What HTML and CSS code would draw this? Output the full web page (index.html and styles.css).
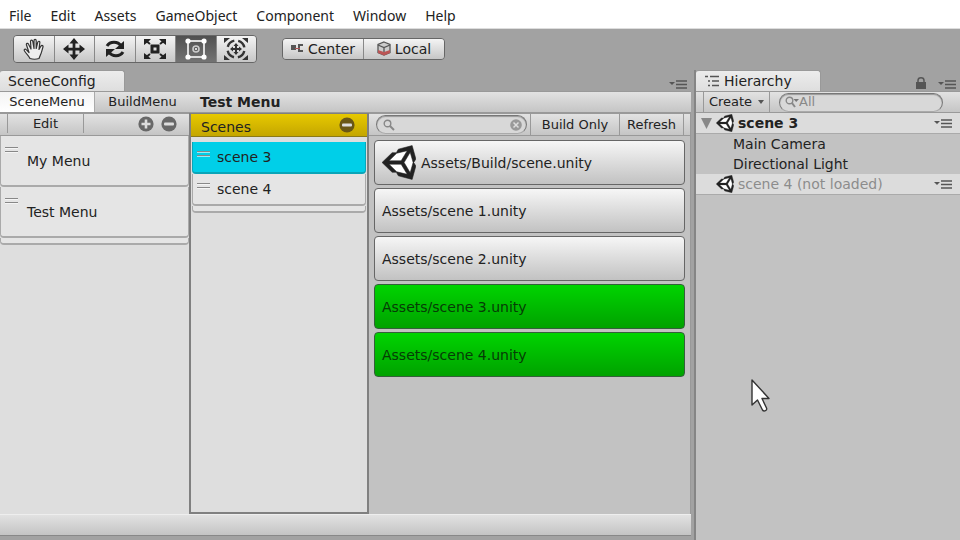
FILE: index.html
```html
<!DOCTYPE html>
<html lang="en">
<head>
<meta charset="utf-8">
<title>Unity Editor - SceneConfig</title>
<link rel="stylesheet" href="styles.css">
</head>
<body>
<svg class="sprite" aria-hidden="true">
  <symbol id="unity" viewBox="15 10 485 492">
    <path fill="#fff" d="M440 60 250 90 60 256l190 166 190 30 40-196z"/>
    <path fill="#222" stroke="#222" stroke-width="8" d="M498 206 445 15 248 66l-29 51-59-1L16 256l144 140 59-1 29 51 197 51 53-191-30-50zM224 124l151-37-87 145H115zm0 264L115 280h173l87 145zm193 14L330 256l87-146 42 146z"/>
  </symbol>
  <symbol id="menu" viewBox="0 0 18 9">
    <path fill="#555" d="M0 2h6L3 5z"/><path stroke="#555" stroke-width="1.4" d="M7 1h11M7 4.5h11M7 8h11"/>
  </symbol>
  <symbol id="minus" viewBox="0 0 16 16">
    <circle cx="8" cy="8" r="7.6" fill="currentColor"/><rect class="sign" x="3" y="6.6" width="10" height="2.8" rx="1"/>
  </symbol>
  <symbol id="grip" viewBox="0 0 13 6">
    <path stroke="#888" d="M0 .5h13M0 4.5h13"/><path stroke="#fff" stroke-opacity=".6" d="M0 1.5h13M0 5.5h13"/>
  </symbol>
</svg>

<nav class="menubar">
  <a href="#">File</a><a href="#">Edit</a><a href="#">Assets</a><a href="#">GameObject</a><a href="#">Component</a><a href="#">Window</a><a href="#">Help</a>
</nav>

<header class="toolbar">
  <div class="group tools">
    <button aria-label="Hand"><svg viewBox="0 0 22 22" width="22" height="22"><path fill="#eee" stroke="#333" stroke-width="1.200" stroke-linejoin="round" stroke-linecap="round" d="M7 20.500C6 18 3.500 16 1.500 13c-1-1.800.8-2.600 2-1.200L6 14.500 3.500 7c-.5-1.800 1.400-2.300 2-.8L8 11 7.500 3.500c0-1.800 2-1.800 2.300 0L11 10.500V2.800c0-1.800 2.200-1.800 2.200 0v7.700l1.500-6.200c.5-1.700 2.400-1.200 2.100.5L16 11.500l1.800-3.200c1-1.500 2.700-.7 2.100.9-.9 2.800-1.200 5-2.300 7.300L16 20.500c-3 1-6 1-9 0z"/></svg></button>
    <button aria-label="Move"><svg viewBox="0 0 24 24" width="22" height="22"><path fill="#222" d="M12 0l5 6h-3.500v4.500H18V7l6 5-6 5v-3.500h-4.500V18H17l-5 6-5-6h3.500v-4.500H6V17l-6-5 6-5v3.500h4.500V6H7z"/></svg></button>
    <button aria-label="Rotate"><svg viewBox="0 0 20 18" width="20" height="18"><path fill="none" stroke="#222" stroke-width="3" d="M2 6C5 1 13 1 16 6M18 12C15 17 7 17 4 12"/><path fill="#222" d="M19 1v8h-9zM1 17V9h9z"/></svg></button>
    <button aria-label="Scale"><svg viewBox="0 0 24 22" width="24" height="22"><path fill="none" stroke="#222" stroke-width="3" d="M9 8h6v6H9z"/><path stroke="#222" stroke-width="2" d="M2 2l5 4M22 2l-5 4M2 20l5-4M22 20l-5-4"/><path fill="#222" d="M1 7V1h7L5 4zM23 7V1h-7l3 3zM1 15v6h7l-3-3zM23 15v6h-7l3-3z"/></svg></button>
    <button aria-label="Rect" aria-pressed="true"><svg viewBox="0 0 22 22" width="22" height="22"><path fill="none" stroke="#ddd" stroke-width="2" d="M3 3h16v16H3z"/><g fill="#fff"><circle cx="3" cy="3" r="2.600"/><circle cx="19" cy="3" r="2.600"/><circle cx="3" cy="19" r="2.600"/><circle cx="19" cy="19" r="2.600"/></g><circle cx="11" cy="11" r="3" fill="none" stroke="#ccc" stroke-width="1.600"/><circle cx="11" cy="11" r="1" fill="#fff"/></svg></button>
    <button aria-label="Transform"><svg viewBox="0 0 24 24" width="24" height="24"><circle cx="12" cy="12" r="8.500" fill="none" stroke="#333" stroke-width="2.400" stroke-dasharray="9.350 4" stroke-dashoffset="-2"/><path fill="#333" d="M0 6V1h6zM24 6V1h-6zM0 18v5h6zM24 18v5h-6zM12 6l2.500 3H13v2h2V9.500l3 2.500-3 2.500V13h-2v2h1.500L12 18l-2.500-3H11v-2H9v1.500L6 12l3-2.500V11h2V9H9.500z"/></svg></button>
  </div>
  <div class="group pivots">
    <button><svg viewBox="0 0 13 9" width="13" height="9"><path fill="#555" d="M0 1h5v5H0zM7 0h5v2H9v4h3v2H7z"/><path stroke="#a55" d="M4 4.500h5"/></svg>Center</button>
    <button><svg viewBox="0 0 14 15" width="14" height="15"><path fill="#ccc" stroke="#555" stroke-width="1.300" d="M7 1l6 2.500v8L7 14l-6-2.500v-8z"/><path fill="#b55" d="M1 9l6 2 6-2v3l-6 2.500L1 12z"/><path fill="none" stroke="#555" stroke-width="1.300" d="M1 4l6 2.500L13 4M7 6v5"/></svg>Local</button>
  </div>
</header>

<main class="workspace">
  <section class="window config">
    <div class="tabs"><h2 class="tab">SceneConfig</h2><button class="icon options" aria-label="Window options"><svg width="18" height="9"><use href="#menu"/></svg></button></div>
    <div class="bar modes"><button class="mode" aria-pressed="true">SceneMenu</button><button class="mode">BuildMenu</button><strong>Test Menu</strong></div>
    <div class="columns">
      <section class="menus">
        <div class="bar actions">
          <button class="edit">Edit</button>
          <button class="icon" aria-label="Add menu"><svg width="16" height="16" viewBox="0 0 16 16"><circle cx="8" cy="8" r="7.600" fill="#686868"/><path stroke="#ddd" stroke-width="2.600" d="M3.500 8h9M8 3.500v9"/></svg></button>
          <button class="icon" aria-label="Remove menu"><svg width="16" height="16"><use href="#minus"/></svg></button>
        </div>
        <ul class="list tall">
          <li><svg class="grip"><use href="#grip"/></svg>My Menu</li>
          <li><svg class="grip"><use href="#grip"/></svg>Test Menu</li>
        </ul>
      </section>
      <section class="scenes">
        <div class="scenes-head"><h3>Scenes</h3><button class="icon" aria-label="Remove scene group"><svg width="16" height="16"><use href="#minus"/></svg></button></div>
        <ul class="list">
          <li class="selected"><svg class="grip"><use href="#grip"/></svg>scene 3</li>
          <li><svg class="grip"><use href="#grip"/></svg>scene 4</li>
        </ul>
      </section>
      <section class="assets">
        <div class="bar filter">
          <div class="search"><svg width="12" height="12" viewBox="0 0 12 12"><circle cx="4.500" cy="4.500" r="3.300" fill="none" stroke="#888" stroke-width="1.400"/><path stroke="#888" stroke-width="2" d="M7 7l4 4"/></svg><input type="text" aria-label="Search scenes"><button class="icon" aria-label="Clear search"><svg width="12" height="12" viewBox="0 0 12 12"><circle cx="6" cy="6" r="5.800" fill="#999"/><path stroke="#ddd" stroke-width="1.500" d="M3.500 3.500l5 5M8.500 3.500l-5 5"/></svg></button></div>
          <button class="build">Build Only</button><button class="refresh">Refresh</button>
        </div>
        <div class="cards">
          <button class="card"><svg width="34" height="35"><use href="#unity"/></svg>Assets/Build/scene.unity</button>
          <button class="card">Assets/scene 1.unity</button>
          <button class="card">Assets/scene 2.unity</button>
          <button class="card loaded">Assets/scene 3.unity</button>
          <button class="card loaded">Assets/scene 4.unity</button>
        </div>
      </section>
    </div>
    <footer class="status"></footer>
  </section>

  <section class="window hierarchy">
    <div class="tabs">
      <h2 class="tab"><svg width="15" height="12" viewBox="0 0 15 12"><path stroke="#555" stroke-width="1.500" d="M0 1.500h3M5 1.500h9M3 6h2M7 6h7M3 10.500h2M7 10.500h7"/></svg>Hierarchy</h2>
      <button class="icon lock" aria-label="Lock"><svg width="10" height="12" viewBox="0 0 10 12"><path fill="#555" d="M0 5h10v7H0z"/><path fill="none" stroke="#555" stroke-width="1.500" d="M2 6V3.500c0-3.600 6-3.600 6 0V6"/></svg></button>
      <button class="icon" aria-label="Window options"><svg width="18" height="9"><use href="#menu"/></svg></button>
    </div>
    <div class="bar filter">
      <button class="create">Create<svg width="6" height="4" viewBox="0 0 6 4"><path fill="#555" d="M0 0h6L3 4z"/></svg></button>
      <div class="search"><svg width="14" height="12" viewBox="0 0 14 12"><circle cx="4.500" cy="4.500" r="3.300" fill="none" stroke="#888" stroke-width="1.400"/><path stroke="#888" stroke-width="2" d="M7 7l3 4"/><path fill="#777" d="M8.500 3H14l-2.800 3z"/></svg><input type="text" placeholder="All" aria-label="Search hierarchy"></div>
    </div>
    <ul class="tree">
      <li class="scene"><svg class="fold" viewBox="0 0 11 11"><path fill="#888" d="M0 0h11L5.500 11z"/></svg><svg class="logo"><use href="#unity"/></svg><b>scene 3</b><button class="icon" aria-label="Scene options"><svg width="18" height="9"><use href="#menu"/></svg></button></li>
      <li class="object">Main Camera</li>
      <li class="object">Directional Light</li>
      <li class="scene unloaded"><span class="fold"></span><svg class="logo"><use href="#unity"/></svg><span>scene 4 (not loaded)</span><button class="icon" aria-label="Scene options"><svg width="18" height="9"><use href="#menu"/></svg></button></li>
    </ul>
  </section>
</main>
<svg class="cursor" viewBox="0 0 20 34" width="20" height="34" aria-hidden="true"><path fill="#fff" stroke="#333" stroke-width="1.400" stroke-linejoin="round" d="M1 1v25l5.500-5 5 10c1.500 2 5 .5 4-2l-4.500-9.500H18z"/></svg>
</body>
</html>
```

FILE: styles.css
```css
* { box-sizing: border-box; }

body {
  margin: 0;
  height: 100vh;
  display: flex;
  flex-direction: column;
  overflow: hidden;
  background: #a2a2a2;
  color: #222;
  font: 14px/20px "DejaVu Sans", sans-serif;
}

button, input { font: inherit; color: inherit; margin: 0; padding: 0; border: 0; background: none; }
h2, h3 { margin: 0; font-size: inherit; font-weight: normal; }
ul { margin: 0; padding: 0; list-style: none; }
svg { flex: none; display: block; }
.sprite { position: absolute; width: 0; height: 0; }
.icon { color: #686868; }
.sign { fill: #ddd; }

.menubar {
  display: flex;
  gap: 19px;
  height: 29px;
  flex: none;
  padding: 4px 9px;
  background: #fff;
  border-bottom: 1px solid #ddd;
  font: 14px/23px "Noto Sans", sans-serif;
}
.menubar a { color: #222; text-decoration: none; }

.toolbar {
  display: flex;
  align-items: center;
  gap: 25px;
  height: 41px;
  flex: none;
  padding: 0 13px 2px;
}
.group {
  display: flex;
  overflow: hidden;
  border: 1px solid #666;
  border-radius: 4px;
}
.group button {
  flex: 1;
  display: flex;
  align-items: center;
  justify-content: center;
  gap: 4px;
  background: linear-gradient(#f4f4f4, #c6c6c6);
}
.group button + button { border-left: 1px solid #888; }
.tools { width: 244px; }
.tools button { height: 26px; }
.tools button[aria-pressed="true"] { background: linear-gradient(#505050, #737373); }
.pivots { width: 163px; }
.pivots button { height: 20px; }

.workspace { flex: 1; display: flex; gap: 3px; min-height: 0; }
.window { display: flex; flex-direction: column; min-width: 0; }
.config { flex: 1; padding-bottom: 4px; }
.hierarchy { width: 266px; background: #c2c2c2; border-left: 2px solid #858585; }

.tabs {
  display: flex;
  align-items: flex-end;
  gap: 12px;
  height: 21px;
  flex: none;
  padding-right: 4px;
  background: #a2a2a2;
}
.tabs .icon { padding-bottom: 2px; }
.tab {
  display: flex;
  align-items: center;
  gap: 4px;
  width: 125px;
  height: 21px;
  padding-left: 8px;
  border: 1px solid #999;
  border-width: 1px 1px 0 0;
  border-radius: 3px 3px 0 0;
  background: linear-gradient(#ececec, #dedede);
}
.options, .lock { margin-left: auto; }

.bar {
  display: flex;
  align-items: center;
  height: 22px;
  flex: none;
  border-top: 1px solid #999;
  border-bottom: 1px solid #999;
  background: linear-gradient(#e2e2e2, #c5c5c5);
  font-size: 13px;
}
.mode { align-self: stretch; width: 95px; }
.mode[aria-pressed="true"] { background: linear-gradient(#f4f4f4, #fff); border-right: 1px solid #aaa; }
.modes strong { padding-left: 10px; font-size: 14px; }

.columns {
  flex: 1;
  display: grid;
  grid-template-columns: 189px 180px 1fr;
  min-height: 0;
  border-right: 1px solid #999;
}
.menus, .scenes { background: #dedede; }
.actions { gap: 7px; padding: 0 12px 2px 7px; height: 23px; }
.edit { align-self: stretch; width: 77px; margin-right: auto; border: 1px solid #999; border-width: 0 1px; }

.list li {
  display: flex;
  align-items: center;
  position: relative;
  height: 32px;
  padding-left: 24px;
  border: 2px solid #aaa;
  border-width: 0 1px 2px;
  border-radius: 0 0 4px 4px;
  background: #e5e5e5;
}
.list::after {
  content: "";
  display: block;
  height: 5px;
  border: 2px solid #aaa;
  border-width: 0 1px 2px;
  border-radius: 0 0 4px 4px;
  background: #e5e5e5;
}
.tall li { height: 51px; padding-left: 26px; }
.grip { position: absolute; left: 4px; top: 11px; width: 13px; height: 6px; }
.scenes .grip { top: 9px; }
.list .selected { background: #00cfe8; border-color: #0aa5b8; }

.scenes { border: 2px solid #808080; border-width: 1px 2px 2px; }
.scenes .list { padding: 5px 1px; }
.scenes-head {
  display: flex;
  align-items: center;
  justify-content: space-between;
  height: 23px;
  padding: 0 12px 0 10px;
  background: linear-gradient(#e7c900, #c4a600);
  border-bottom: 1px solid #8b7a18;
}
.scenes-head h3 { padding-top: 4px; }
.scenes-head .icon { color: #6a5716; }
.scenes-head .icon .sign { fill: #c8aa10; }

.assets { background: #c2c2c2; min-width: 0; }
.filter { height: 23px; }
.search {
  flex: 1;
  display: flex;
  align-items: center;
  gap: 2px;
  min-width: 0;
  height: 19px;
  padding: 0 4px 0 6px;
  border: 1px solid #777;
  border-bottom-color: #aaa;
  border-radius: 10px;
  background: #d8d8d8;
  box-shadow: inset 0 1px 1px #999;
}
.search input { flex: 1; min-width: 0; outline: 0; }
.search input::placeholder { color: #888; opacity: 1; }
.assets .search { margin: 0 3px 0 7px; }
.build, .refresh { align-self: stretch; border-left: 1px solid #999; }
.build { width: 89px; }
.refresh { width: 65px; border-right: 1px solid #999; margin-right: 6px; }

.cards { display: flex; flex-direction: column; gap: 3px; padding: 4px 5px; }
.card {
  display: flex;
  align-items: center;
  gap: 5px;
  height: 45px;
  padding: 0 7px;
  border: 1px solid #666;
  border-radius: 4px;
  background: linear-gradient(#f6f6f6, #c2c2c2);
}
.loaded { background: linear-gradient(#00d400, #00a200); color: #063c06; border-color: #34603a; }

.status { height: 22px; flex: none; border-top: 1px solid #eee; border-bottom: 1px solid #888; background: linear-gradient(#e2e2e2, #c4c4c4); }

.hierarchy .tab { padding-left: 9px; }
.hierarchy .bar { height: 22px; padding: 0 17px 0 7px; }
.hierarchy .search { gap: 0; padding-left: 5px; }
.create { display: flex; align-items: center; justify-content: center; gap: 6px; width: 67px; align-self: stretch; border: 1px solid #999; border-width: 0 1px; margin-right: 9px; }
.tree li { height: 20px; display: flex; align-items: center; }
.scene { gap: 4px; padding: 0 8px 0 5px; background: #dcdcdc; border-bottom: 1px solid #aaa; }
.tree .scene { height: 21px; }
.scene .icon { margin-left: auto; }
.fold { width: 11px; height: 11px; }
.logo { width: 18px; height: 18px; }
.object { padding-left: 37px; }
.unloaded { color: #8c8c8c; }

.cursor { position: absolute; left: 751px; top: 379px; }
```
